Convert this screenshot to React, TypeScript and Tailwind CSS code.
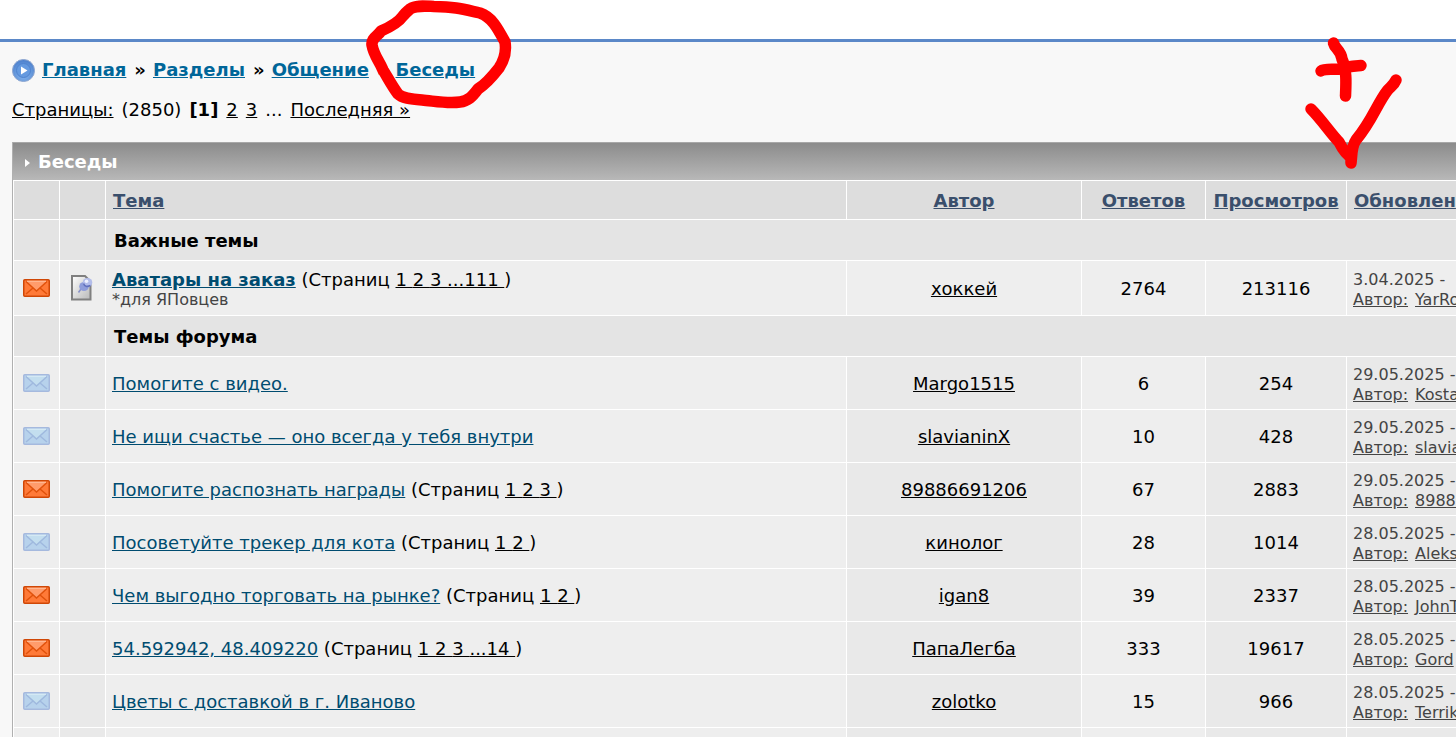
import React from "react";

type Topic = {
  hot?: boolean;
  pinned?: boolean;
  title: string;
  pages?: string[];
  note?: string;
  author: string;
  replies: number;
  views: number;
  date: string;
  last: string;
};

const pinned: Topic[] = [
  { hot: true, pinned: true, title: "Аватары на заказ", pages: ["1", "2", "3", "...111"], note: "*для ЯПовцев", author: "хоккей", replies: 2764, views: 213116, date: "3.04.2025 -", last: "YarRo" },
];

const topics: Topic[] = [
  { title: "Помогите с видео.", author: "Margo1515", replies: 6, views: 254, date: "29.05.2025 -", last: "Kosta" },
  { title: "Не ищи счастье — оно всегда у тебя внутри", author: "slavianinX", replies: 10, views: 428, date: "29.05.2025 -", last: "slavianinX" },
  { hot: true, title: "Помогите распознать награды", pages: ["1", "2", "3"], author: "89886691206", replies: 67, views: 2883, date: "29.05.2025 -", last: "89886691206" },
  { title: "Посоветуйте трекер для кота", pages: ["1", "2"], author: "кинолог", replies: 28, views: 1014, date: "28.05.2025 -", last: "Aleks" },
  { hot: true, title: "Чем выгодно торговать на рынке?", pages: ["1", "2"], author: "igan8", replies: 39, views: 2337, date: "28.05.2025 -", last: "JohnT" },
  { hot: true, title: "54.592942, 48.409220", pages: ["1", "2", "3", "...14"], author: "ПапаЛегба", replies: 333, views: 19617, date: "28.05.2025 -", last: "Gord" },
  { title: "Цветы с доставкой в г. Иваново", author: "zolotko", replies: 15, views: 966, date: "28.05.2025 -", last: "Terrik" },
];

function Envelope({ hot }: { hot?: boolean }) {
  const edge = hot ? "#cf4706" : "#a5b9de";
  const body = hot ? "#ff7a38" : "#b7d2ec";
  const flap = hot ? "#ff9c6c" : "#c3deef";
  const line = hot ? "#e0520c" : "#9fb9de";
  const shine = hot ? "#ffc4a4" : "#dceef6";
  return (
    <svg className="mx-auto block" width="27" height="18" viewBox="0 0 27 18" aria-hidden="true">
      <rect x="0.75" y="0.75" width="25.5" height="16.5" rx="1" fill={body} stroke={edge} strokeWidth="1.5" />
      <path d="M3 15 L10 9 M24 15 L17 9" stroke={line} strokeWidth="1.5" fill="none" />
      <path d="M3 2 H24 L13.5 12 Z" fill={flap} />
      <path d="M3 2.5 L13.5 12 L24 2.5" stroke={line} strokeWidth="1.5" fill="none" />
      <path d="M4 2.2 H23" stroke={shine} strokeWidth="1" />
    </svg>
  );
}

function PinnedNote() {
  return (
    <svg className="mx-auto block" width="22" height="26" viewBox="0 0 22 26" aria-hidden="true">
      <defs>
        <linearGradient id="paper" x1="0" y1="0" x2="1" y2="1">
          <stop offset="0" stopColor="#ffffff" />
          <stop offset="1" stopColor="#b8b8b8" />
        </linearGradient>
      </defs>
      <path d="M1 1 H14 L19.500 6.500 V24.500 H1 Z" fill="url(#paper)" stroke="#808080" strokeWidth="2" />
      <path d="M7.500 17.500 L11 12.500" stroke="#8790c8" strokeWidth="1.5" />
      <ellipse cx="13" cy="11.500" rx="4.800" ry="4.500" fill="#8f9ddb" />
      <ellipse cx="16.500" cy="7.500" rx="4.800" ry="4.500" fill="#b3bdea" />
      <path d="M12.500 8.500 Q14 13 19.500 10.500" stroke="#6170bd" strokeWidth="1.6" fill="none" />
      <circle cx="15.500" cy="6.200" r="1.800" fill="#eef1ff" />
    </svg>
  );
}

function TopicRow({ t }: { t: Topic }) {
  const alt = t.pinned ? "bg-[#eeeeee]" : "bg-[#e9e9e9]";
  return (
    <tr className={t.pinned ? "h-[55px]" : "h-[53px]"}>
      <td className="border-r border-b border-white bg-[#eeeeee]"><Envelope hot={t.hot} /></td>
      <td className={`border-r border-b border-white pr-0.5 ${alt}`}>{t.pinned && <PinnedNote />}</td>
      <td className={`border-r border-b border-white bg-[#eeeeee] pl-1.5 leading-5 ${t.pinned ? "pt-1" : "pt-0.5"}`}>
        <a href="#" className={t.pinned ? "font-bold text-[#004c70] underline" : "text-[#004c70] underline"}>{t.title}</a>
        {t.pages && (
          <span>
            {" "}(Страниц{" "}
            {t.pages.map((p) => (
              <a key={p} href="#" className="whitespace-pre underline">{p + " "}</a>
            ))}
            )
          </span>
        )}
        {t.note && <div className="text-base leading-5 text-[#444444]">{t.note}</div>}
      </td>
      <td className={`border-r border-b border-white pt-0.5 text-center ${alt}`}><a href="#" className="underline">{t.author}</a></td>
      <td className="border-r border-b border-white bg-[#eeeeee] pt-0.5 text-center">{t.replies}</td>
      <td className={`border-r border-b border-white pt-0.5 text-center ${alt}`}>{t.views}</td>
      <td className={`border-b border-white pt-1 pl-1.5 text-base leading-5 text-[#444444] ${alt}`}>
        <div>{t.date}</div>
        <div className="flex gap-[7px]">
          <a href="#" className="underline">Автор:</a>
          <a href="#" className="underline">{t.last}</a>
        </div>
      </td>
    </tr>
  );
}

function SectionRow({ children }: { children: string }) {
  return (
    <tr className="h-[41px]">
      <td className="border-r border-b border-white bg-[#e4e4e4]" />
      <td className="border-r border-b border-white bg-[#e4e4e4]" />
      <td colSpan={5} className="border-b border-white bg-[#e4e4e4] pt-0.5 pl-2 font-bold">{children}</td>
    </tr>
  );
}

function Heading({ children, align = "center" }: { children: string; align?: "left" | "center" }) {
  return (
    <th className={`border-r border-b border-white pt-0.5 font-bold ${align === "left" ? "pl-[7px] text-left" : "text-center"}`}>
      <a href="#" className="text-[#3a4f6c] underline">{children}</a>
    </th>
  );
}

function Separator() {
  return <span className="pr-[7px] pl-2 text-black">»</span>;
}

export default function App() {
  return (
    <div className="relative min-h-screen overflow-hidden bg-[#f8f8f8] font-['DejaVu_Sans',Verdana,sans-serif] text-lg leading-6 text-black">
      <header className="h-[42px] border-b-3 border-[#5b88c8] bg-white" />
      <nav className="flex items-center px-3 pt-4 font-bold text-[#006699]">
        <svg className="mr-[7px]" width="23" height="23" viewBox="0 0 23 23" aria-hidden="true">
          <defs>
            <radialGradient id="ball" cx="0.5" cy="0.7" r="0.65">
              <stop offset="0" stopColor="#86b6ee" />
              <stop offset="1" stopColor="#4f83cf" />
            </radialGradient>
          </defs>
          <circle cx="11.5" cy="11.5" r="11" fill="url(#ball)" stroke="#8ea6cf" />
          <circle cx="11.5" cy="11.5" r="7" fill="#659ae0" stroke="#4f83cf" />
          <path d="M9 7.5 L15.5 11.5 L9 15.5 Z" fill="#ffffff" />
        </svg>
        <a href="#" className="underline">Главная</a>
        <Separator />
        <a href="#" className="underline">Разделы</a>
        <Separator />
        <a href="#" className="underline">Общение</a>
        <Separator />
        <a href="#" className="underline">Беседы</a>
      </nav>
      <div className="flex gap-2 px-3 pt-4">
        <a href="#" className="underline">Страницы:</a>
        <span>(2850)</span>
        <b>[1]</b>
        <a href="#" className="underline">2</a>
        <a href="#" className="underline">3</a>
        <span>...</span>
        <a href="#" className="underline">Последняя »</a>
      </div>
      <section className="mt-5 -mr-36 ml-3 border-l border-[#b0b0b0]">
        <h1 className="flex h-[39px] items-center border-t border-b border-t-[#a8a8a8] border-b-white bg-linear-to-b from-[#8c8c8c] to-[#b8b8b8] pl-3 font-bold text-white">
          <svg className="mt-0.5 mr-2 block" width="5" height="8" viewBox="0 0 5 8" aria-hidden="true">
            <path d="M0 0 L5 4 L0 8 Z" fill="#ffffff" />
          </svg>
          Беседы
        </h1>
        <table className="w-full table-fixed border-separate border-spacing-0 border-l border-white">
          <colgroup>
            <col className="w-[46px]" />
            <col className="w-[46px]" />
            <col />
            <col className="w-[235px]" />
            <col className="w-[124px]" />
            <col className="w-[141px]" />
            <col className="w-[253px]" />
          </colgroup>
          <thead>
            <tr className="h-[39px] bg-[#dddddd]">
              <td className="border-r border-b border-white" />
              <td className="border-r border-b border-white" />
              <Heading align="left">Тема</Heading>
              <Heading>Автор</Heading>
              <Heading>Ответов</Heading>
              <Heading>Просмотров</Heading>
              <Heading align="left">Обновлен</Heading>
            </tr>
          </thead>
          <tbody>
            <SectionRow>Важные темы</SectionRow>
            {pinned.map((t) => <TopicRow key={t.title} t={t} />)}
            <SectionRow>Темы форума</SectionRow>
            {topics.map((t) => <TopicRow key={t.title} t={t} />)}
            <tr className="h-[9px]">
              <td className="border-r border-white bg-[#eeeeee]" />
              <td className="border-r border-white bg-[#e9e9e9]" />
              <td className="border-r border-white bg-[#eeeeee]" />
              <td className="border-r border-white bg-[#e9e9e9]" />
              <td className="border-r border-white bg-[#eeeeee]" />
              <td className="border-r border-white bg-[#e9e9e9]" />
              <td className="bg-[#e9e9e9]" />
            </tr>
          </tbody>
        </table>
      </section>
      <svg className="pointer-events-none absolute top-0 left-[360px]" width="160" height="112" viewBox="360 0 160 112" aria-hidden="true">
        <path d="M410 9 C416 5 424 6 434 6.500 C456 7 462 9 480 13 C492 17 498 29 505 42 C507 54 503 62 499 68 C492 77 486 84 478 89 C472 97 468 101 460 102 C448 104 434 101 422 100 C410 99 402 98 398 94 C392 86 388 78 383 70 C379 60 374 56 372 45 C371 38 378 36 381 31 C388 28 398 23 403 16 C406 12 408 11 410 9 Z" fill="none" stroke="#ff0000" strokeWidth="11.500" strokeLinejoin="round" />
      </svg>
      <svg className="pointer-events-none absolute top-[30px] right-[46px]" width="110" height="145" viewBox="1300 30 110 145" aria-hidden="true">
        <g fill="none" stroke="#ff0000" strokeWidth="11.500" strokeLinecap="round" strokeLinejoin="round">
          <path d="M1333.500 43 C1335 49 1341 50 1342 59 C1347 70 1346 84 1345.500 96" />
          <path d="M1321 71 C1325 68 1335 70 1341 69 C1348 66 1354 66 1361 65.500" />
          <path d="M1311 109 C1322 120 1331 134 1339 142 C1343 150 1347 155 1351 157 V163 C1352 157 1351 147 1356 140 C1372 121 1377 104 1387 91 C1390 87 1394 85 1396 80" />
        </g>
      </svg>
    </div>
  );
}
